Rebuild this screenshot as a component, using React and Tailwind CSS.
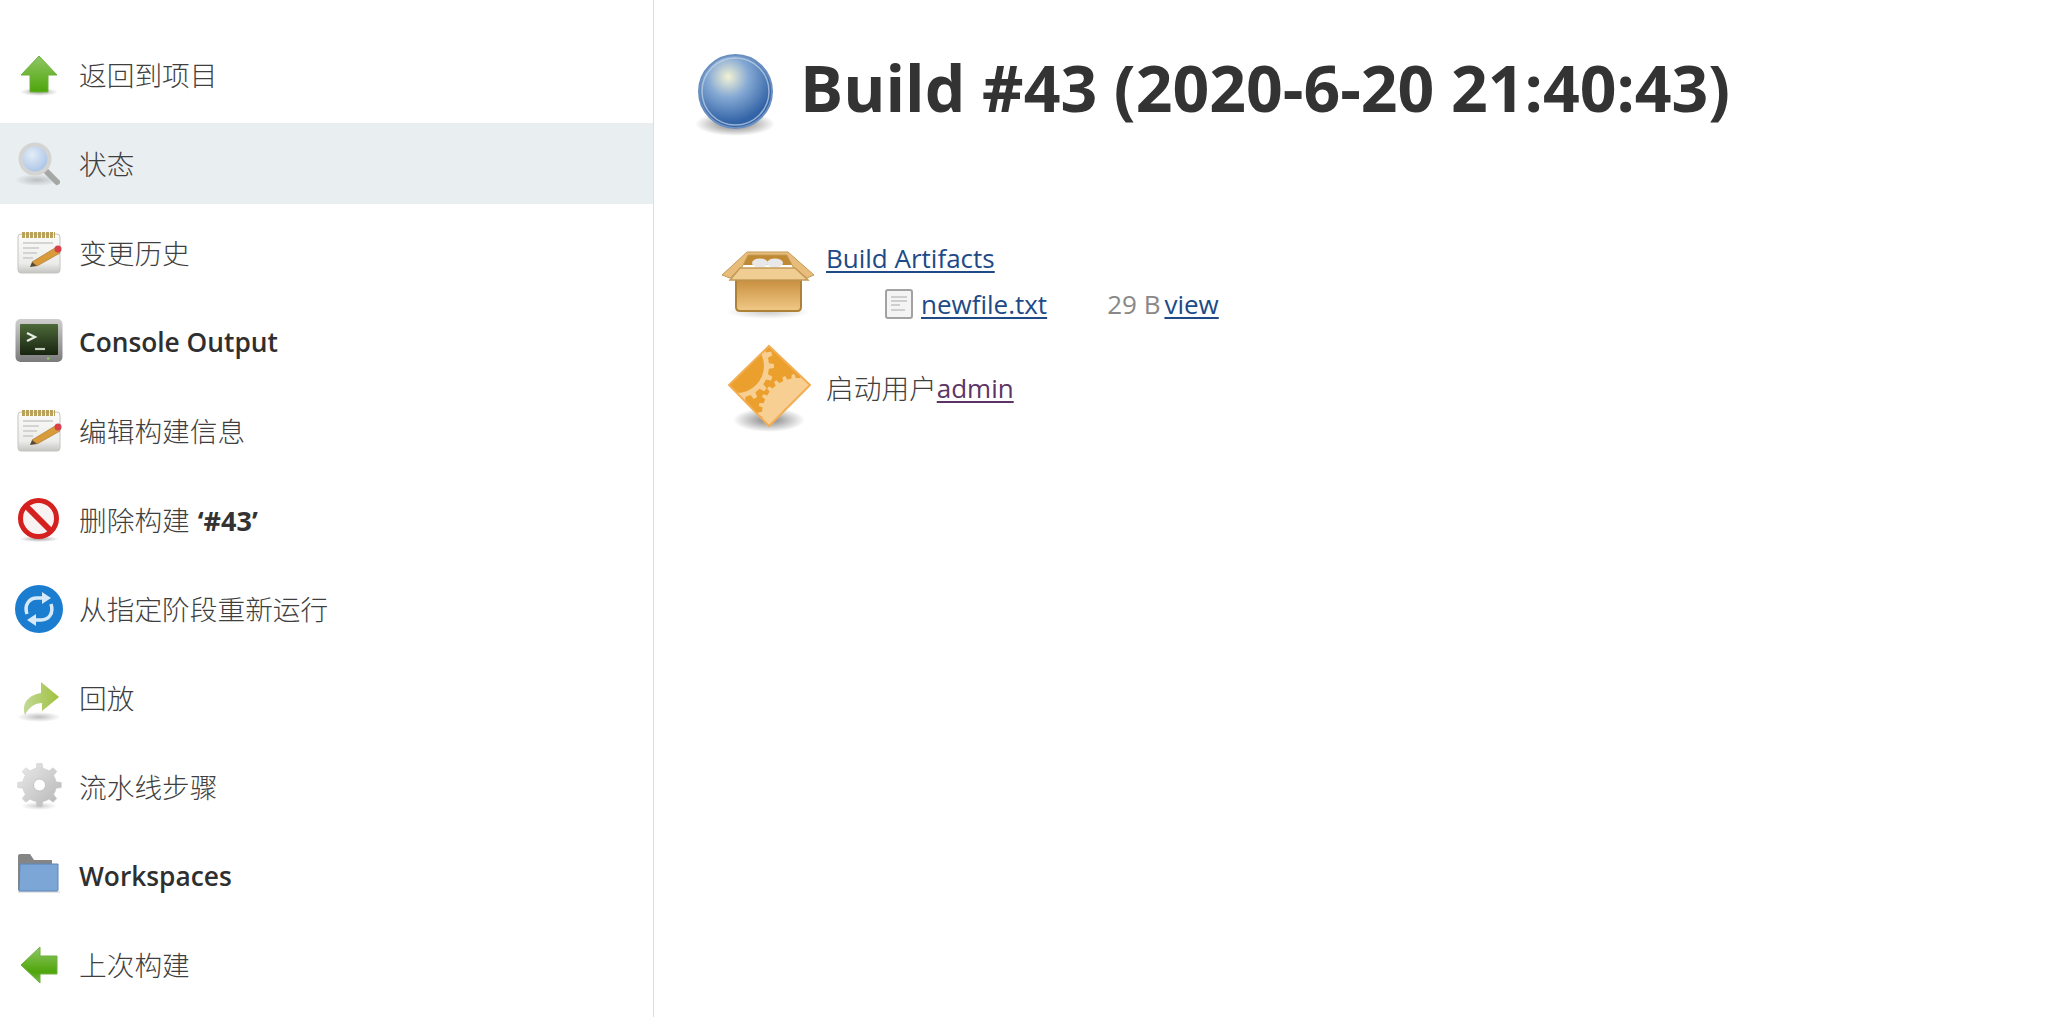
import React, { useId } from 'react';

// soft drop shadow under the tango style icons
const Shadow = ({ cx = 24, cy = 44, rx = 18, ry = 3, opacity = 0.35 }) => {
    const id = useId();
    return (
        <>
            <defs>
                <radialGradient id={id}>
                    <stop offset="0" stopColor="#000" stopOpacity={opacity} />
                    <stop offset="1" stopColor="#000" stopOpacity="0" />
                </radialGradient>
            </defs>
            <ellipse cx={cx} cy={cy} rx={rx} ry={ry} fill={`url(#${id})`} />
        </>
    );
};

// Helper to build a toothed circle
const gearPath = (cx, cy, inner, outer, teeth) => {
    const pts = [];
    const step = (Math.PI * 2) / teeth;
    for (let i = 0; i < teeth; i++) {
        const a = i * step;
        [[inner, -0.5], [inner, -0.25], [outer, -0.15], [outer, 0.15], [inner, 0.25]].forEach(([r, k]) => {
            const t = a + k * step;
            pts.push(`${(cx + r * Math.cos(t)).toFixed(2)} ${(cy + r * Math.sin(t)).toFixed(2)}`);
        });
    }
    return `M${pts.join(' L')} Z`;
};

const iconClass = 'w-12 h-12 shrink-0 blur-[0.5px]';

const UpArrow = () => (
    <svg viewBox="0 0 48 48" className={iconClass}>
        <defs>
            <linearGradient id="up" x1="0" y1="0" x2="0" y2="1">
                <stop offset="0" stopColor="#8fc765" />
                <stop offset="1" stopColor="#4ea50a" />
            </linearGradient>
        </defs>
        <Shadow cx={24} cy={41} rx={19} ry={4} />
        <path d="M24 5 L42 24 H33 V41 H15 V24 H6 Z" fill="url(#up)" stroke="#6cae3d" strokeWidth="1" />
    </svg>
);

const LeftArrow = () => (
    <svg viewBox="0 0 48 48" className={iconClass}>
        <defs>
            <linearGradient id="left" x1="0" y1="0" x2="0" y2="1">
                <stop offset="0" stopColor="#8fc765" />
                <stop offset="0.7" stopColor="#4ea50a" />
                <stop offset="1" stopColor="#7fbb55" />
            </linearGradient>
        </defs>
        <path d="M6 24 L25 6 V15 H42 V33 H25 V42 Z" fill="url(#left)" stroke="#6cae3d" strokeWidth="1" />
    </svg>
);

const Search = () => (
    <svg viewBox="0 0 48 48" className={iconClass}>
        <defs>
            <radialGradient id="lens" cx="0.4" cy="0.35" r="0.7">
                <stop offset="0" stopColor="#e3ecf7" />
                <stop offset="1" stopColor="#a3c0e4" />
            </radialGradient>
        </defs>
        <Shadow cx={22} cy={40} rx={22} ry={6} opacity={0.2} />
        <path d="M29 29 L42 42" stroke="#a5a7a5" strokeWidth="6" strokeLinecap="round" />
        <circle cx="20" cy="19" r="14.5" fill="url(#lens)" stroke="#d4d5d3" strokeWidth="4" />
    </svg>
);

const Notepad = () => (
    <svg viewBox="0 0 48 48" className={iconClass}>
        <defs>
            <linearGradient id="pad" x1="0" y1="0" x2="0" y2="1">
                <stop offset="0" stopColor="#fbfbf9" />
                <stop offset="0.75" stopColor="#ececea" />
                <stop offset="1" stopColor="#c4c4c2" />
            </linearGradient>
        </defs>
        <rect x="3" y="5" width="42" height="39" rx="3" fill="url(#pad)" stroke="#c4c4c0" />
        <path d="M7 6 H40" stroke="#b9a35c" strokeWidth="6" strokeDasharray="3 1" />
        <path d="M8 14 H38 M8 19 H24 M8 24 H22 M8 29 H18" stroke="#c9c9c7" strokeWidth="1.5" />
        <path d="M17 33 L40 19 L45 24 L22 37 Z" fill="#d99a3c" stroke="#b07d30" strokeWidth="0.7" />
        <circle cx="43" cy="20" r="3.5" fill="#d9414a" />
        <path d="M17 33 L15 38 L22 37 Z" fill="#5b4a32" />
    </svg>
);

const Terminal = () => (
    <svg viewBox="0 0 48 48" className={iconClass}>
        <defs>
            <linearGradient id="bezel" x1="0" y1="0" x2="0" y2="1">
                <stop offset="0" stopColor="#cfcfcf" />
                <stop offset="1" stopColor="#7a7a7a" />
            </linearGradient>
            <linearGradient id="screen" x1="0" y1="0" x2="0" y2="1">
                <stop offset="0" stopColor="#4d6a3a" />
                <stop offset="1" stopColor="#17230f" />
            </linearGradient>
        </defs>
        <rect x="0.5" y="1" width="47" height="43" rx="5" fill="url(#bezel)" />
        <rect x="5" y="6" width="38" height="31" rx="1" fill="url(#screen)" />
        <path d="M12 15 L20 19 L12 23" fill="none" stroke="#e8ede4" strokeWidth="2.2" />
        <path d="M20 31 H30" stroke="#c3cdbc" strokeWidth="2.2" />
        <rect x="32" y="39.5" width="2.5" height="2" fill="#8ad15a" />
    </svg>
);

const Forbidden = () => (
    <svg viewBox="0 0 48 48" className={iconClass}>
        <Shadow cx={24} cy={43} rx={20} ry={3} />
        <circle cx="23.5" cy="22.5" r="18" fill="#f8f2f2" stroke="#d4201f" strokeWidth="5" />
        <path d="M11 10 L36 35" stroke="#d4201f" strokeWidth="6" />
    </svg>
);

const Refresh = () => (
    <svg viewBox="0 0 48 48" className={iconClass}>
        <circle cx="24" cy="24" r="24" fill="#1a7dcf" />
        <path d="M12 29 C9 20 14 13 22 13 H28" fill="none" stroke="#d6e9f8" strokeWidth="3.5" />
        <path d="M27 7 L36 13 L27 19 Z" fill="#d6e9f8" />
        <path d="M36 19 C39 28 34 35 26 35 H20" fill="none" stroke="#d6e9f8" strokeWidth="3.5" />
        <path d="M21 29 L12 35 L21 41 Z" fill="#d6e9f8" />
    </svg>
);

const Redo = () => (
    <svg viewBox="0 0 48 48" className={iconClass}>
        <defs>
            <linearGradient id="redo" x1="0" y1="0" x2="1" y2="0">
                <stop offset="0" stopColor="#c3d896" />
                <stop offset="1" stopColor="#9fc23d" />
            </linearGradient>
        </defs>
        <Shadow cx={24} cy={43} rx={22} ry={5} opacity={0.25} />
        <path d="M10 41 C6 29 14 21 26 19 V8 L44 23 L27 37 V29 C20 29 14 33 10 41 Z" fill="url(#redo)" />
    </svg>
);

const Gear = () => (
    <svg viewBox="0 0 48 48" className={iconClass}>
        <defs>
            <linearGradient id="gear" x1="0" y1="0" x2="1" y2="1">
                <stop offset="0" stopColor="#ebebeb" />
                <stop offset="1" stopColor="#b5b5b5" />
            </linearGradient>
        </defs>
        <Shadow cx={24} cy={43} rx={18} ry={4} opacity={0.2} />
        <path d={gearPath(24.5, 22, 17, 22, 8)} fill="url(#gear)" stroke="#c8c8c8" strokeWidth="0.5" />
        <circle cx="24.5" cy="22" r="6" fill="#fff" stroke="#c4c4c4" />
    </svg>
);

const Folder = () => (
    <svg viewBox="0 0 48 48" className={iconClass}>
        <path d="M3 4 Q3 2 5 2 H15 L19 8 H37 V14 H3 Z" fill="#858585" />
        <rect x="3" y="8" width="10" height="30" fill="#858585" />
        <path d="M5 12 H43 V38 Q43 39 42 39 H4 Z" fill="#7ba6d6" stroke="#5b87bd" />
        <path d="M3 40 H45" stroke="#000" strokeOpacity="0.1" strokeWidth="2" />
    </svg>
);

const Ball = () => (
    <svg viewBox="0 0 80 88" className="w-20 h-[88px] shrink-0 blur-[0.4px]">
        <defs>
            <radialGradient id="ball" cx="0.4" cy="0.3" r="0.7">
                <stop offset="0" stopColor="#f3f2d4" />
                <stop offset="0.4" stopColor="#85a9d4" />
                <stop offset="0.9" stopColor="#3263a6" />
            </radialGradient>
        </defs>
        <Shadow cx={40} cy={72} rx={40} ry={12} opacity={0.55} />
        <circle cx="40.5" cy="39.5" r="36.5" fill="url(#ball)" stroke="#6b8fc0" strokeWidth="2" />
        <circle cx="40.5" cy="39.5" r="33.5" fill="none" stroke="#c5d4e8" strokeOpacity="0.7" strokeWidth="1.5" />
    </svg>
);

const Box = () => (
    <svg viewBox="0 0 105 75" className="w-[105px] h-[75px] shrink-0 mt-[5px] blur-[0.4px]">
        <defs>
            <linearGradient id="box" x1="0" y1="0" x2="0" y2="1">
                <stop offset="0" stopColor="#c98f3f" />
                <stop offset="1" stopColor="#f0c987" />
            </linearGradient>
        </defs>
        <Shadow cx={53} cy={67} rx={42} ry={7} opacity={0.2} />
        <path d="M28 20 L33 10 H72 L78 20 Z" fill="#c08a35" />
        <ellipse cx="45" cy="18" rx="8" ry="4.5" fill="#e8e8e8" />
        <ellipse cx="60" cy="18" rx="8" ry="4.5" fill="#e8e8e8" />
        <path d="M32 7 H73 L99 30 L92 33 L78 22 L72 10 H33 L27 22 L15 33 L7 30 Z" fill="#e8bd7c" stroke="#c49a55" strokeWidth="1" />
        <path d="M21 35 H86 V62 Q86 66 82 66 H25 Q21 66 21 62 Z" fill="url(#box)" stroke="#ae8236" strokeWidth="2" />
        <path d="M25 23 H80 L93 35 H15 Z" fill="#f0cd92" stroke="#c49a55" strokeWidth="1.5" />
    </svg>
);

const Diamond = () => (
    <svg viewBox="0 0 84 88" className="w-[84px] h-[88px] shrink-0 blur-[0.4px]">
        <defs>
            <clipPath id="diamond">
                <path d="M42 2 L83 41 L42 82 L2 41 Z" />
            </clipPath>
        </defs>
        <Shadow cx={42} cy={76} rx={36} ry={12} opacity={0.5} />
        <g clipPath="url(#diamond)">
            <rect width="84" height="88" fill="#eba02e" />
            <path d={gearPath(71, 70, 36, 40, 26)} fill="#f8cf92" />
            <path d={gearPath(10, 22, 32, 37, 18)} fill="#f8cf92" />
            <circle cx="10" cy="22" r="27" fill="#eba02e" />
        </g>
        <path d="M42 2 L83 41 L42 82 L2 41 Z" fill="none" stroke="#f2ae55" strokeWidth="2" />
    </svg>
);

const FileIcon = () => (
    <svg viewBox="0 0 28 30" className="w-7 h-[30px] shrink-0">
        <rect x="1" y="1" width="26" height="28" rx="2" fill="#f4f4f4" stroke="#a2a2a2" strokeWidth="2" />
        <path d="M6 8 H22 M6 12 H22 M6 16 H15 M6 21 H20" stroke="#cfcfcf" strokeWidth="2" />
    </svg>
);

const items = [
    { icon: UpArrow, label: '返回到项目' },
    { icon: Search, label: '状态', active: true },
    { icon: Notepad, label: '变更历史' },
    { icon: Terminal, label: 'Console Output', bold: true },
    { icon: Notepad, label: '编辑构建信息' },
    { icon: Forbidden, label: '删除构建', suffix: '‘#43’' },
    { icon: Refresh, label: '从指定阶段重新运行' },
    { icon: Redo, label: '回放' },
    { icon: Gear, label: '流水线步骤' },
    { icon: Folder, label: 'Workspaces', bold: true },
    { icon: LeftArrow, label: '上次构建' },
];

const linkClass = 'text-[#204a87] underline decoration-2 underline-offset-[3px]';

export default function App() {
    return (
        <div className="flex h-[1017px] overflow-hidden bg-white text-[#333] text-[27.7px] font-['Open_Sans','Noto_Sans_CJK_SC',sans-serif]">
            <aside className="w-[654px] shrink-0 border-r border-[#dedede] pt-[34px] flex flex-col gap-2">
                {items.map(({ icon: Icon, label, active, bold, suffix }, i) => (
                    <div key={i} className={`h-[81px] shrink-0 flex items-center pl-[15px] gap-[16px] ${active ? 'bg-[#e9eef1]' : ''}`}>
                        <Icon />
                        <span className={bold ? 'mt-[3px] font-semibold text-[#2f2f2f] text-[26.3px]' : 'mt-[2px] font-light text-[#3f3f3f]'}>
                            {label}
                            {suffix && <b className="font-bold text-[#333] text-[27px] ml-2">{suffix}</b>}
                        </span>
                    </div>
                ))}
            </aside>
            <main className="flex-1 pl-[41px] text-[26px]">
                <div className="flex items-start gap-[25px] pt-[52px] h-[240px]">
                    <Ball />
                    <h1 className="text-[64.3px] leading-[70px] font-bold text-[#333] whitespace-nowrap">Build #43 (2020-6-20 21:40:43)</h1>
                </div>
                <div className="flex items-start pl-[20px]">
                    <Box />
                    <div className="ml-[6px]">
                        <a className={`${linkClass} leading-[36px] block`}>Build Artifacts</a>
                        <div className="flex items-center mt-[10px] ml-[59px] leading-[36px]">
                            <FileIcon />
                            <a className={`${linkClass} ml-2`}>newfile.txt</a>
                            <span className="ml-[60px] text-[#888]">29 B</span>
                            <a className={`${linkClass} ml-1`}>view</a>
                        </div>
                    </div>
                </div>
                <div className="flex items-center pl-[32px] mt-[22px]">
                    <Diamond />
                    <div className="ml-[15px] mt-[1px] flex items-center">
                        <span className="font-light text-[#3f3f3f] text-[27.7px]">启动用户</span>
                        <a className="text-[#5c3566] underline decoration-2 underline-offset-[3px]">admin</a>
                    </div>
                </div>
            </main>
        </div>
    );
}
